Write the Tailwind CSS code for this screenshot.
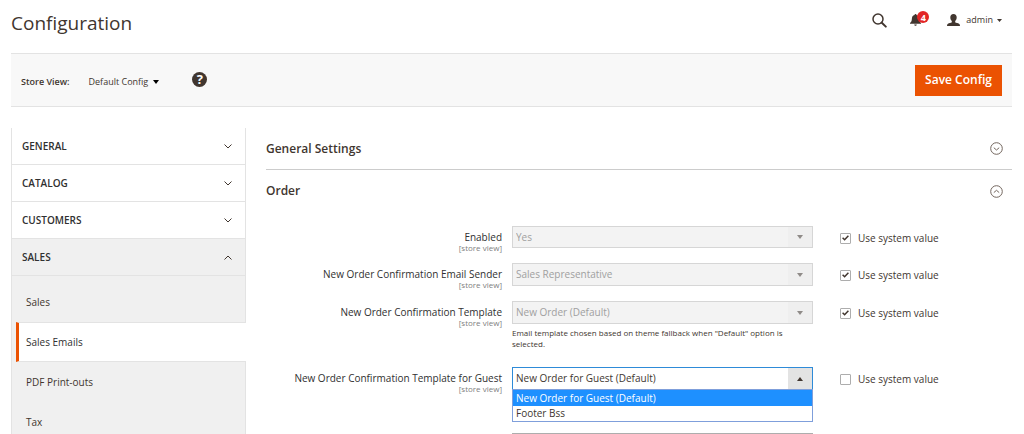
<!DOCTYPE html>
<html lang="en">
<head>
<meta charset="utf-8">
<meta name="viewport" content="width=device-width, initial-scale=1">
<title>Configuration</title>
<script src="https://cdn.jsdelivr.net/npm/@tailwindcss/browser@4"></script>
</head>
<body class="bg-white font-['Open_Sans','Noto_Sans',sans-serif] text-[10px] text-[#41362f]">

<header class="flex h-[53px] items-start justify-between pl-[11px] pr-[22px]">
  <h1 class="pt-[9px] text-[19px] leading-[28px]">Configuration</h1>
  <div class="flex h-10 items-center">
    <button type="button" aria-label="Search" class="mr-[23px]">
      <svg class="size-[15px]" viewBox="0 0 15 15" fill="none" stroke="#41362f"><circle cx="6" cy="6" r="5" stroke-width="1.5"/><path d="M9.8 9.8l4 3.8" stroke-width="2" stroke-linecap="round"/></svg>
    </button>
    <button type="button" aria-label="Notifications, 4 unread" class="relative mr-[26px]">
      <svg class="h-[12px] w-[11px]" viewBox="0 0 11 12" fill="#41362f"><path d="M5.5 0c.6 0 1 .4 1 .9C8.400 1.400 9 2.800 9.100 4.500c.1 2.600.8 3.700 1.900 4.500v.8H0V9c1.100-.8 1.800-1.900 1.900-4.500C2 2.800 2.600 1.400 4.500.9c0-.5.4-.9 1-.9zM4.200 10.400h2.600c-.1.8-.6 1.300-1.300 1.300s-1.200-.5-1.300-1.300z"/></svg>
      <span class="absolute -top-[3px] left-[7px] flex size-3 items-center justify-center rounded-full bg-[#e22626] text-[9px] font-bold leading-none text-white">4</span>
    </button>
    <button type="button" class="flex items-center">
      <svg class="mr-[6px] h-[12px] w-[13px]" viewBox="0 0 13 12.400" preserveAspectRatio="none" fill="#41362f"><path d="M6.500 0C8.600 0 9.700 1.400 9.700 3.400c0 1.700-.6 3.100-1.500 3.900v1.200c.3.600 3.800 1 4.400 2 .3.600.4 1.300.4 1.900H0c0-.6.1-1.300.4-1.900.6-1 4.100-1.400 4.400-2V7.300C3.900 6.500 3.300 5.100 3.300 3.400 3.300 1.400 4.400 0 6.500 0z"/></svg>
      <span class="text-[9px]">admin</span>
      <svg class="ml-[4px] h-[3px] w-[5px]" viewBox="0 0 5 3" fill="#41362f"><path d="M0 0h5L2.500 3z"/></svg>
    </button>
  </div>
</header>

<section class="ml-[11px] mr-[12px] flex h-[54px] items-center border-y border-[#e3e3e3] bg-[#f8f8f8] px-[10px]">
  <span class="mt-[4px] text-[9px] font-semibold">Store View:</span>
  <button type="button" class="ml-[19px] mt-[4px] flex items-center text-[9px]">Default Config
    <svg class="ml-[5px] h-[4px] w-[6px]" viewBox="0 0 6 4" fill="#000"><path d="M0 0h6L3 4z"/></svg>
  </button>
  <button type="button" aria-label="Help" class="-mt-[2px] ml-[33px] flex size-[15px] items-center justify-center rounded-full bg-[#41362f] text-[13px] font-bold leading-none text-white">?</button>
  <button type="button" class="ml-auto h-[31px] bg-[#eb5202] px-[10px] text-[12px] font-semibold text-white">Save Config</button>
</section>

<div class="mt-[21px] flex items-stretch pl-[11px] pr-[12px]">
  <nav aria-label="Configuration sections" class="w-[235px] shrink-0 border-x border-[#e3e3e3]">
    <button type="button" class="flex h-[37px] w-full items-center justify-between border-b border-[#e3e3e3] pl-[10px] pr-[13px] font-semibold text-[#303030]">GENERAL
      <svg class="h-[5px] w-[8px]" viewBox="0 0 8 5" fill="none" stroke="#41362f"><path d="M.5.5L4 4 7.500.5"/></svg></button>
    <button type="button" class="flex h-[37px] w-full items-center justify-between border-b border-[#e3e3e3] pl-[10px] pr-[13px] font-semibold text-[#303030]">CATALOG
      <svg class="h-[5px] w-[8px]" viewBox="0 0 8 5" fill="none" stroke="#41362f"><path d="M.5.5L4 4 7.500.5"/></svg></button>
    <button type="button" class="flex h-[37px] w-full items-center justify-between border-b border-[#e3e3e3] pl-[10px] pr-[13px] font-semibold text-[#303030]">CUSTOMERS
      <svg class="h-[5px] w-[8px]" viewBox="0 0 8 5" fill="none" stroke="#41362f"><path d="M.5.5L4 4 7.500.5"/></svg></button>
    <button type="button" class="flex h-[37px] w-full items-center justify-between border-b border-[#e3e3e3] bg-[#f0f0f0] pl-[10px] pr-[13px] font-semibold text-[#303030]">SALES
      <svg class="h-[5px] w-[8px]" viewBox="0 0 8 5" fill="none" stroke="#41362f"><path d="M.5 4.500L4 1l3.500 3.500"/></svg></button>
    <ul class="bg-[#f0f0f0] pt-[6px] pb-4">
      <li><a href="#" class="flex h-10 items-center pl-[14px]">Sales</a></li>
      <li><a href="#" aria-current="page" class="-mr-px ml-[4px] flex h-10 items-center border-y border-l-[3px] border-y-[#e3e3e3] border-l-[#eb5202] bg-white pl-[7px] font-medium text-[#303030]">Sales Emails</a></li>
      <li><a href="#" class="flex h-10 items-center pl-[14px]">PDF Print-outs</a></li>
      <li><a href="#" class="flex h-10 items-center pl-[14px]">Tax</a></li>
    </ul>
  </nav>

  <main class="ml-5 min-w-0 flex-1">
    <button type="button" class="flex h-[42px] w-full items-center justify-between border-b border-[#cccccc] pr-[9px] text-[12px] font-semibold">General Settings
      <svg class="size-[13px]" viewBox="0 0 13 13" fill="none" stroke="#73665e"><circle cx="6.500" cy="6.500" r="5.800"/><path d="M3.800 5.700l2.700 2.300 2.700-2.300"/></svg></button>
    <button type="button" class="flex h-[42px] w-full items-center justify-between pr-[9px] text-[12px] font-semibold">Order
      <svg class="size-[13px]" viewBox="0 0 13 13" fill="none" stroke="#73665e"><circle cx="6.500" cy="6.500" r="5.800"/><path d="M3.800 7.600l2.700-2.300 2.700 2.300"/></svg></button>

    <form class="mt-[14px]">
      <div class="grid min-h-[37px] grid-cols-[246fr_301fr_199fr] items-start">
        <label for="enabled" class="pr-[10px] pt-[4px] text-right font-medium leading-[14px] text-[#303030]">Enabled<span class="block text-[8px] font-normal leading-[8px] text-[#808080]">[store view]</span></label>
        <div class="relative">
          <select id="enabled" disabled class="block h-[22px] w-full appearance-none border border-[#d6d6d6] bg-[#f3f3f3] pl-[3px] text-[#a0a0a0]"><option>Yes</option></select>
          <span class="pointer-events-none absolute inset-y-px right-px flex w-6 items-center justify-center bg-[#efefef]"><svg class="h-[4px] w-[6px]" viewBox="0 0 6 4" fill="#8f8b88"><path d="M0 0h6L3 4z"/></svg></span>
        </div>
        <label class="flex h-[24px] items-center gap-[7px] pl-[27px]"><input type="checkbox" checked class="peer size-[11px] appearance-none rounded-[1px] border border-[#adadad] bg-white"><svg class="pointer-events-none -ml-[16px] mr-[2px] hidden h-[6px] w-[7px] peer-checked:block" viewBox="0 0 7 6" fill="none" stroke="#41362f" stroke-width="1.500"><path d="M.6 2.800l2 2L6.400.8"/></svg>Use system value</label>
      </div>

      <div class="grid min-h-[38px] grid-cols-[246fr_301fr_199fr] items-start">
        <label for="sender" class="pr-[10px] pt-[4px] text-right font-medium leading-[14px] text-[#303030]">New Order Confirmation Email Sender<span class="block text-[8px] font-normal leading-[8px] text-[#808080]">[store view]</span></label>
        <div class="relative">
          <select id="sender" disabled class="block h-[23px] w-full appearance-none border border-[#d6d6d6] bg-[#f3f3f3] pl-[3px] text-[#a0a0a0]"><option>Sales Representative</option></select>
          <span class="pointer-events-none absolute inset-y-px right-px flex w-6 items-center justify-center bg-[#efefef]"><svg class="h-[4px] w-[6px]" viewBox="0 0 6 4" fill="#8f8b88"><path d="M0 0h6L3 4z"/></svg></span>
        </div>
        <label class="flex h-[24px] items-center gap-[7px] pl-[27px]"><input type="checkbox" checked class="peer size-[11px] appearance-none rounded-[1px] border border-[#adadad] bg-white"><svg class="pointer-events-none -ml-[16px] mr-[2px] hidden h-[6px] w-[7px] peer-checked:block" viewBox="0 0 7 6" fill="none" stroke="#41362f" stroke-width="1.500"><path d="M.6 2.800l2 2L6.400.8"/></svg>Use system value</label>
      </div>

      <div class="grid min-h-[66px] grid-cols-[246fr_301fr_199fr] items-start">
        <label for="template" class="pr-[10px] pt-[4px] text-right font-medium leading-[14px] text-[#303030]">New Order Confirmation Template<span class="block text-[8px] font-normal leading-[8px] text-[#808080]">[store view]</span></label>
        <div>
          <div class="relative">
            <select id="template" disabled aria-describedby="template-note" class="block h-[23px] w-full appearance-none border border-[#d6d6d6] bg-[#f3f3f3] pl-[3px] text-[#a0a0a0]"><option>New Order (Default)</option></select>
            <span class="pointer-events-none absolute inset-y-px right-px flex w-6 items-center justify-center bg-[#efefef]"><svg class="h-[4px] w-[6px]" viewBox="0 0 6 4" fill="#8f8b88"><path d="M0 0h6L3 4z"/></svg></span>
          </div>
          <p id="template-note" class="pr-[12px] pt-[3px] text-[8px] leading-[11px]">Email template chosen based on theme fallback when "Default" option is selected.</p>
        </div>
        <label class="flex h-[24px] items-center gap-[7px] pl-[27px]"><input type="checkbox" checked class="peer size-[11px] appearance-none rounded-[1px] border border-[#adadad] bg-white"><svg class="pointer-events-none -ml-[16px] mr-[2px] hidden h-[6px] w-[7px] peer-checked:block" viewBox="0 0 7 6" fill="none" stroke="#41362f" stroke-width="1.500"><path d="M.6 2.800l2 2L6.400.8"/></svg>Use system value</label>
      </div>

      <div class="grid min-h-[66px] grid-cols-[246fr_301fr_199fr] items-start">
        <label for="guest" class="pr-[10px] pt-[4px] text-right font-medium leading-[14px] text-[#303030]">New Order Confirmation Template for Guest<span class="block text-[8px] font-normal leading-[8px] text-[#808080]">[store view]</span></label>
        <div class="relative">
          <select id="guest" class="block h-[23px] w-full appearance-none border border-[#2e8bd8] bg-white pl-[3px]"><option>New Order for Guest (Default)</option><option>Footer Bss</option></select>
          <span class="pointer-events-none absolute right-px top-px flex h-[21px] w-6 items-center justify-center bg-[#e3e3e3]"><svg class="h-[4px] w-[6px]" viewBox="0 0 6 4" fill="#41362f"><path d="M0 4h6L3 0z"/></svg></span>
          <ul role="listbox" aria-label="New Order Confirmation Template for Guest" class="absolute inset-x-0 top-[22px] z-10 border border-[#7f9fdb] bg-white leading-[15px]">
            <li role="option" aria-selected="true" class="bg-[#1e90ff] pl-[3px] pt-px text-white">New Order for Guest (Default)</li>
            <li role="option" aria-selected="false" class="pl-[3px]">Footer Bss</li>
          </ul>
        </div>
        <label class="flex h-[24px] items-center gap-[7px] pl-[27px]"><input type="checkbox" class="peer size-[11px] appearance-none rounded-[1px] border border-[#adadad] bg-white"><svg class="pointer-events-none -ml-[16px] mr-[2px] hidden h-[6px] w-[7px] peer-checked:block" viewBox="0 0 7 6" fill="none" stroke="#41362f" stroke-width="1.500"><path d="M.6 2.800l2 2L6.400.8"/></svg>Use system value</label>
      </div>

      <div class="grid grid-cols-[246fr_301fr_199fr] items-start">
        <select aria-label="Email copy method" class="col-start-2 block h-[23px] w-full appearance-none border border-[#adadad] bg-white pl-[3px]"></select>
      </div>
    </form>
  </main>
</div>
</body>
</html>
